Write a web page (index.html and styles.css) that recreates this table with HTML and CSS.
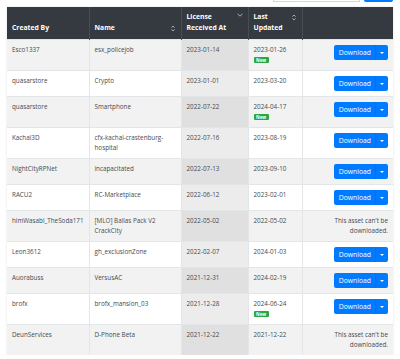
FILE: index.html
```html
<!DOCTYPE html>
<html>
<head>
<meta charset="utf-8">
<link rel="stylesheet" href="styles.css">
</head>
<body>
<div class="page">
  <div class="toolbar">
    <div class="search"></div>
    <div class="search-btn"></div>
  </div>
  <table class="assets">
    <colgroup>
      <col class="c1"><col class="c2"><col class="c3"><col class="c4"><col class="c5">
    </colgroup>
    <thead>
      <tr>
        <th>Created By</th>
        <th><svg class="sort" viewBox="0 0 4 7" width="4" height="7"><path d="M0.5 2.6 L2 1 L3.5 2.6 M0.5 4.4 L2 6 L3.5 4.4" fill="none" stroke="#c8ccd0" stroke-width="0.8"/></svg>Name</th>
        <th><svg class="sort down" viewBox="0 0 6 4" width="6" height="4"><path d="M0.5 0.7 L3 3.2 L5.5 0.7" fill="none" stroke="#c8ccd0" stroke-width="0.8"/></svg>License Received At</th>
        <th><svg class="sort" viewBox="0 0 4 7" width="4" height="7"><path d="M0.5 2.6 L2 1 L3.5 2.6 M0.5 4.4 L2 6 L3.5 4.4" fill="none" stroke="#c8ccd0" stroke-width="0.8"/></svg>Last Updated</th>
        <th></th>
      </tr>
    </thead>
    <tbody>
      <tr><td>Esco1337</td><td>esx_policejob</td><td class="sorted">2023-01-14</td><td>2023-01-26<br><span class="badge">New</span></td><td class="act"><span class="btn-group"><span class="btn">Download</span><span class="btn toggle"><i class="caret"></i></span></span></td></tr>
      <tr><td>quasarstore</td><td>Crypto</td><td class="sorted">2023-01-01</td><td>2023-03-20</td><td class="act"><span class="btn-group"><span class="btn">Download</span><span class="btn toggle"><i class="caret"></i></span></span></td></tr>
      <tr><td>quasarstore</td><td>Smartphone</td><td class="sorted">2022-07-22</td><td>2024-04-17<br><span class="badge">New</span></td><td class="act"><span class="btn-group"><span class="btn">Download</span><span class="btn toggle"><i class="caret"></i></span></span></td></tr>
      <tr><td>Kachal3D</td><td>cfx-kachal-crastenburg-hospital</td><td class="sorted">2022-07-16</td><td>2023-08-19</td><td class="act"><span class="btn-group"><span class="btn">Download</span><span class="btn toggle"><i class="caret"></i></span></span></td></tr>
      <tr><td>NightCityRPNet</td><td>incapacitated</td><td class="sorted">2022-07-13</td><td>2023-09-10</td><td class="act"><span class="btn-group"><span class="btn">Download</span><span class="btn toggle"><i class="caret"></i></span></span></td></tr>
      <tr><td>RACU2</td><td>RC-Marketplace</td><td class="sorted">2022-06-12</td><td>2023-02-01</td><td class="act"><span class="btn-group"><span class="btn">Download</span><span class="btn toggle"><i class="caret"></i></span></span></td></tr>
      <tr><td>himWasabi_TheSoda171</td><td>[MLO] Ballas Pack V2 CrackCity</td><td class="sorted">2022-05-02</td><td>2022-05-02</td><td class="act">This asset can't be downloaded.</td></tr>
      <tr><td>Leon3612</td><td>gh_exclusionZone</td><td class="sorted">2022-02-07</td><td>2024-01-03</td><td class="act"><span class="btn-group"><span class="btn">Download</span><span class="btn toggle"><i class="caret"></i></span></span></td></tr>
      <tr><td>Auorabuss</td><td>VersusAC</td><td class="sorted">2021-12-31</td><td>2024-02-19</td><td class="act"><span class="btn-group"><span class="btn">Download</span><span class="btn toggle"><i class="caret"></i></span></span></td></tr>
      <tr><td>brofx</td><td>brofx_mansion_03</td><td class="sorted">2021-12-28</td><td>2024-06-24<br><span class="badge">New</span></td><td class="act"><span class="btn-group"><span class="btn">Download</span><span class="btn toggle"><i class="caret"></i></span></span></td></tr>
      <tr><td>DeunServices</td><td>D-Phone Beta</td><td class="sorted">2021-12-22</td><td>2021-12-22</td><td class="act">This asset can't be downloaded.</td></tr>
    </tbody>
  </table>
</div>
</body>
</html>
```

FILE: styles.css
```css
html, body {
  margin: 0;
  padding: 0;
  background: #fff;
}
.page {
  padding: 0 7px;
  font-family: "Open Sans", "Noto Sans", sans-serif;
  font-size: 6.3px;
  color: #464b50;
}
.toolbar {
  height: 2px;
  overflow: hidden;
  display: flex;
  justify-content: flex-end;
  gap: 4px;
  margin-bottom: 5px;
}
.search {
  width: 85px;
  height: 1px;
  border: 1px solid #d4d8dc;
  border-top: none;
  background: #fff;
}
.search-btn {
  width: 29px;
  height: 2px;
  background: #007bff;
  border-radius: 0 0 2px 2px;
}
.assets {
  width: 386px;
  table-layout: fixed;
  border-collapse: collapse;
  box-shadow: 0 0 2px rgba(0,0,0,0.12);
}
.c1 { width: 82px; }
.c2 { width: 92px; }
.c3 { width: 67px; }
.c4 { width: 54px; }
.c5 { width: 91px; }
.assets th {
  background: #343a40;
  color: #fff;
  font-weight: 700;
  font-size: 6.8px;
  text-align: left;
  vertical-align: bottom;
  line-height: 10.5px;
  padding: 5px 5px 6px 5px;
  border-left: 1px solid #454d55;
  height: 21px;
}
.assets th:first-child { border-left: none; }
.sort {
  float: right;
  margin-top: 2px;
  margin-right: 1px;
}
.sort.down { margin-top: 1px; margin-right: 0; }
.assets td {
  vertical-align: top;
  line-height: 10px;
  padding: 5px;
  border-top: 1px solid #e3e6e9;
  border-left: 1px solid #e3e6e9;
}
.assets td:first-child { border-left: none; }
.assets tbody tr:nth-child(odd) td { background: #f2f2f2; }
.assets tbody tr td.sorted { background: #ececec; }
.assets tbody tr:nth-child(odd) td.sorted { background: #e0e0e0; }
.act { text-align: right; }
.badge {
  display: inline-block;
  background: #28a745;
  color: #fff;
  font-size: 4.5px;
  font-weight: 700;
  line-height: 6px;
  height: 6px;
  padding: 0 2.5px;
  border-radius: 1px;
  vertical-align: middle;
}
.btn-group {
  display: inline-flex;
  vertical-align: top;
  height: 15px;
  border-radius: 2px;
  overflow: hidden;
}
.btn {
  display: flex;
  align-items: center;
  background: #007bff;
  color: #fff;
  font-size: 6.8px;
  padding: 0 4px 0 5px;
}
.btn.toggle {
  padding: 0 4px;
  border-left: 1px solid #0072ec;
}
.caret {
  display: block;
  width: 0;
  height: 0;
  border-top: 2px solid #fff;
  border-left: 2px solid transparent;
  border-right: 2px solid transparent;
}
```
